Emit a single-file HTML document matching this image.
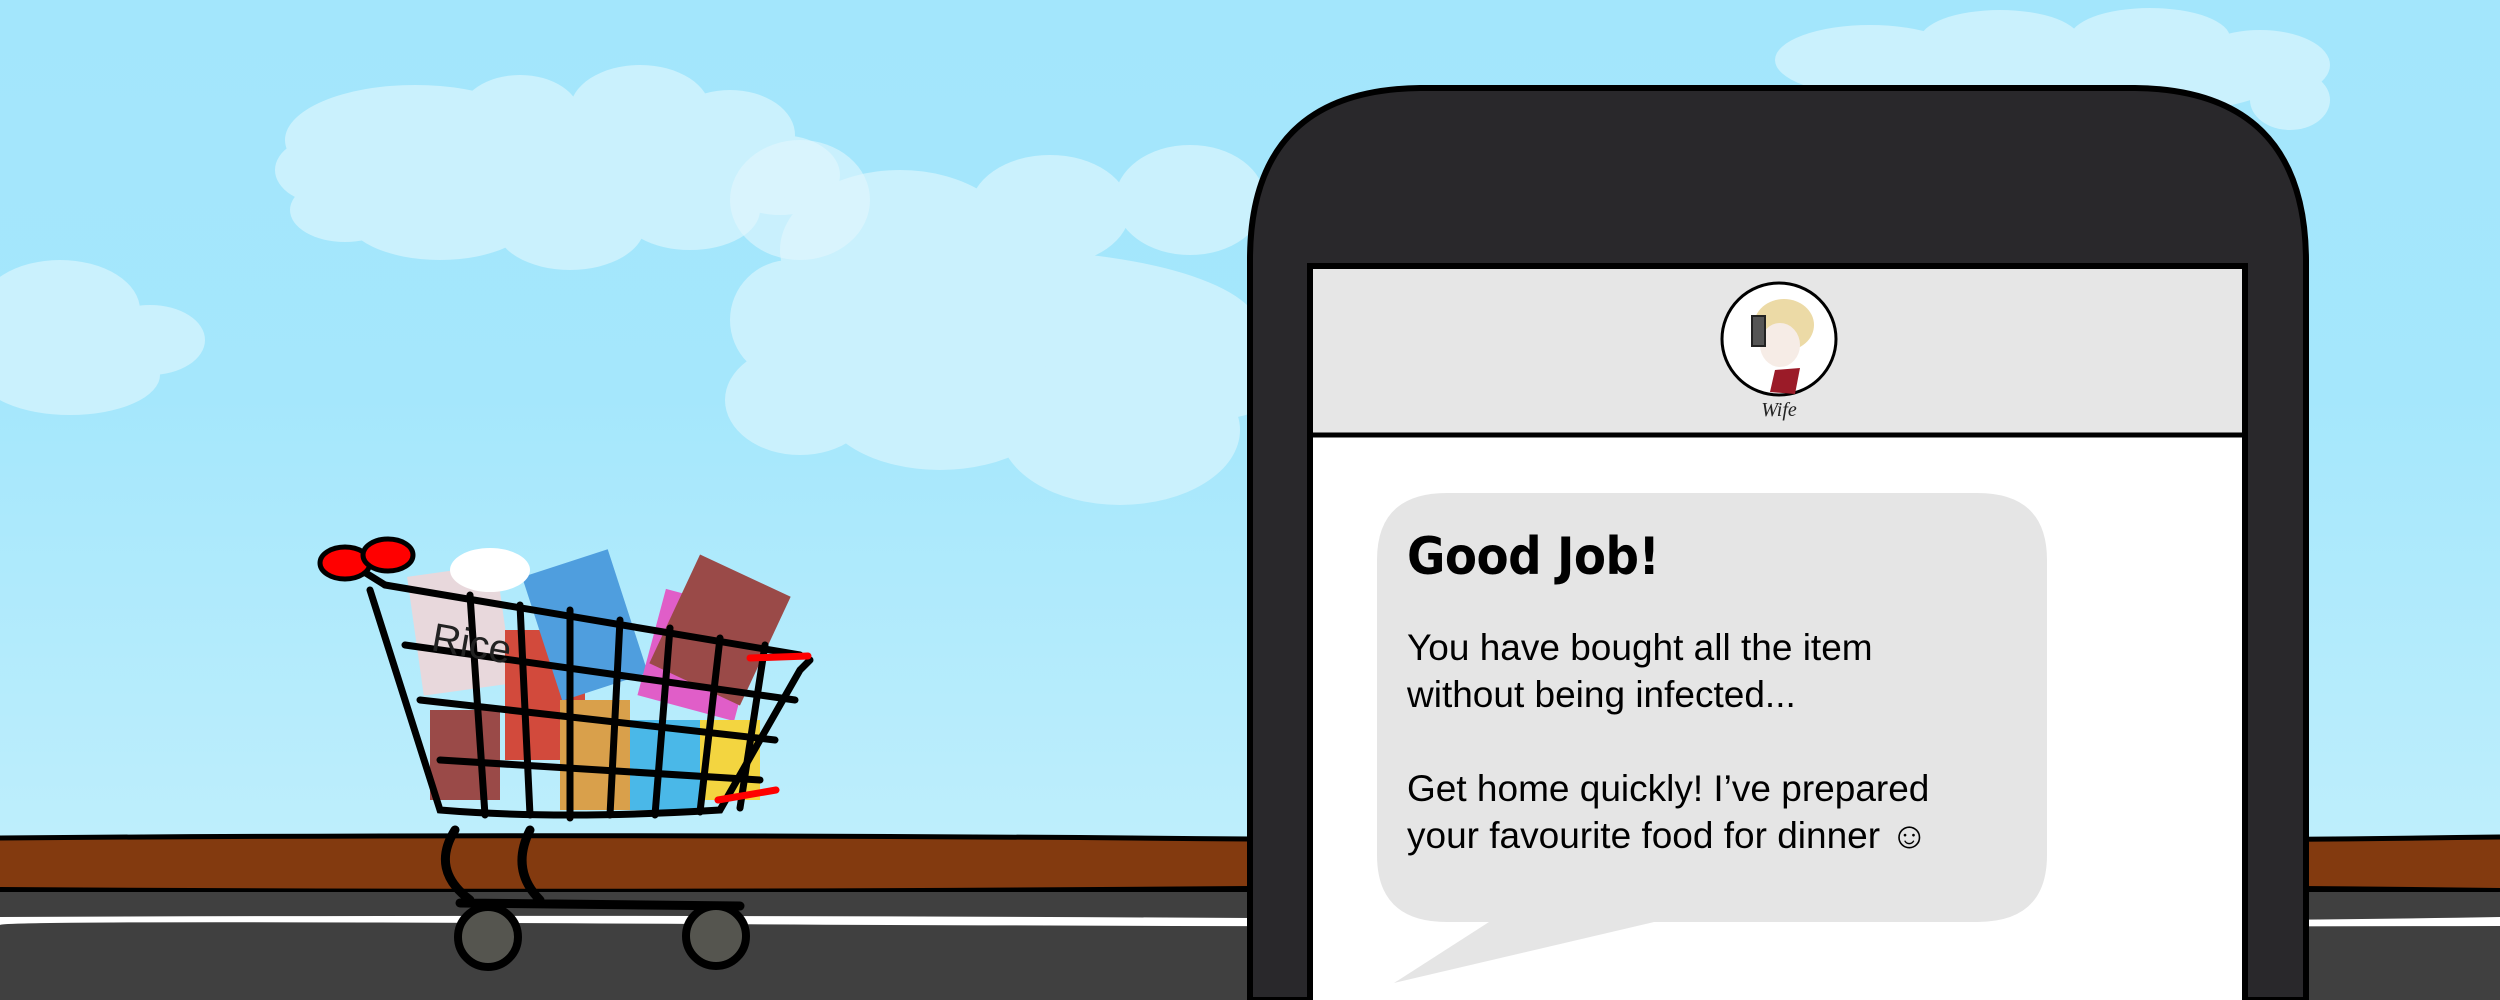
<!DOCTYPE html>
<html><head><meta charset="utf-8"><style>
html,body{margin:0;padding:0}
body{width:2500px;height:1000px;overflow:hidden;position:relative;background:linear-gradient(#a3e6fc 0px,#a5e7fc 400px,#bdeefc 830px);font-family:"Liberation Sans",sans-serif}
svg{position:absolute;left:0;top:0}
.t{position:absolute;left:1407px;color:#000;font-family:"DejaVu Sans Condensed","Liberation Sans",sans-serif}
.b{font-family:"Liberation Sans",sans-serif}
</style></head><body>
<svg width="2500" height="1000" viewBox="0 0 2500 1000">
<g fill="#caf1fd">
<ellipse cx="415" cy="140" rx="130" ry="55"/><ellipse cx="520" cy="115" rx="60" ry="40"/><ellipse cx="640" cy="110" rx="70" ry="45"/><ellipse cx="730" cy="135" rx="65" ry="45"/><ellipse cx="780" cy="175" rx="60" ry="40"/>
<ellipse cx="330" cy="170" rx="55" ry="35"/><ellipse cx="345" cy="210" rx="55" ry="32"/><ellipse cx="440" cy="215" rx="95" ry="45"/><ellipse cx="570" cy="225" rx="75" ry="45"/><ellipse cx="690" cy="210" rx="70" ry="40"/><ellipse cx="580" cy="170" rx="230" ry="60"/>
<ellipse cx="900" cy="250" rx="120" ry="80"/><ellipse cx="1050" cy="210" rx="80" ry="55"/><ellipse cx="1190" cy="200" rx="75" ry="55"/><ellipse cx="1000" cy="330" rx="260" ry="80"/><ellipse cx="790" cy="320" rx="60" ry="60"/><ellipse cx="800" cy="400" rx="75" ry="55"/><ellipse cx="940" cy="400" rx="120" ry="70"/><ellipse cx="1120" cy="430" rx="120" ry="75"/><ellipse cx="1210" cy="360" rx="90" ry="60"/>
<ellipse cx="60" cy="310" rx="80" ry="50"/><ellipse cx="150" cy="340" rx="55" ry="35"/><ellipse cx="70" cy="375" rx="90" ry="40"/><ellipse cx="20" cy="330" rx="60" ry="50"/>
<ellipse cx="1870" cy="60" rx="95" ry="35"/><ellipse cx="2000" cy="40" rx="80" ry="30"/><ellipse cx="2150" cy="38" rx="80" ry="30"/><ellipse cx="2260" cy="65" rx="70" ry="35"/><ellipse cx="2290" cy="100" rx="40" ry="30"/><ellipse cx="2060" cy="80" rx="220" ry="40"/>
</g>
<ellipse cx="800" cy="200" rx="70" ry="60" fill="#e2f7fe" opacity=".6"/>
<rect x="0" y="838" width="2500" height="52" fill="#833a0f"/>
<path d="M0 838 Q600 833 1250 839 T2500 837" stroke="#000" stroke-width="5" fill="none"/>
<path d="M0 890 Q600 894 1250 889 T2500 891" stroke="#000" stroke-width="6" fill="none"/>
<rect x="0" y="892" width="2500" height="108" fill="#404040"/>
<path d="M0 917 Q700 914 1400 919 T2500 917 L2500 926 Q1400 928 700 924 T0 925Z" fill="#fff"/>
<g stroke="#000" stroke-linecap="round" fill="none">
<path d="M455 830 Q430 870 470 900 M530 830 Q510 870 540 900 M460 903 L740 906" stroke-width="9"/>
<circle cx="488" cy="937" r="30" fill="#55554f" stroke-width="8"/>
<circle cx="716" cy="936" r="30" fill="#55554f" stroke-width="8"/>
</g>
<g>
<rect x="415" y="570" width="90" height="120" fill="#e8d8dc" transform="rotate(-8 460 630)"/>
<rect x="505" y="630" width="80" height="130" fill="#d24a3c"/>
<rect x="540" y="560" width="90" height="130" fill="#4f9ede" transform="rotate(-18 585 625)"/>
<rect x="650" y="600" width="100" height="110" fill="#e05ec8" transform="rotate(15 700 655)"/>
<rect x="670" y="570" width="100" height="120" fill="#9a4a48" transform="rotate(25 720 630)"/>
<rect x="560" y="700" width="70" height="110" fill="#d9a04b"/>
<rect x="630" y="720" width="70" height="90" fill="#4ab8e8"/>
<rect x="700" y="720" width="60" height="80" fill="#f3d540"/>
<rect x="430" y="710" width="70" height="90" fill="#9a4a48"/>
<ellipse cx="490" cy="570" rx="40" ry="22" fill="#fff"/>
</g>
<g stroke="#000" stroke-width="7" fill="none" stroke-linecap="round">
<path d="M370 590 L440 810 Q560 820 720 810 L800 670 L810 660"/>
<path d="M385 585 L800 655"/>
<path d="M405 645 L795 700 M420 700 L775 740 M440 760 L760 780"/>
<path d="M470 595 L485 815 M520 605 L530 815 M570 610 L570 818 M620 620 L610 815 M670 628 L655 815 M720 638 L700 812 M765 645 L740 808"/>
<path d="M345 560 L385 585"/>
</g>
<ellipse cx="345" cy="563" rx="25" ry="16" fill="#f00" stroke="#000" stroke-width="5"/>
<ellipse cx="388" cy="555" rx="25" ry="16" fill="#f00" stroke="#000" stroke-width="5"/>
<path d="M750 658 L808 656 M718 800 L776 790" stroke="#f00" stroke-width="7" stroke-linecap="round"/>
<text x="430" y="650" font-size="40" font-family="Liberation Sans" fill="#222" transform="rotate(10 430 650)">Rice</text>
<path d="M1250 1000 L1250 260 Q1250 90 1420 88 L2135 88 Q2305 90 2306 260 L2306 1000 Z" fill="#29282b" stroke="#000" stroke-width="6"/>
<rect x="1310" y="266" width="935" height="740" fill="#fff" stroke="#000" stroke-width="6"/>
<rect x="1313" y="269" width="929" height="165" fill="#e6e6e6"/>
<path d="M1310 435 L2245 435" stroke="#000" stroke-width="5"/>
<ellipse cx="1779" cy="339" rx="57" ry="56" fill="#fff" stroke="#000" stroke-width="3"/>
<ellipse cx="1784" cy="325" rx="30" ry="26" fill="#ecdaa6"/>
<ellipse cx="1780" cy="345" rx="20" ry="22" fill="#f6ece6"/>
<path d="M1775 370 L1800 368 L1795 394 L1770 392Z" fill="#9b1b28"/>
<rect x="1752" y="316" width="13" height="30" fill="#555" stroke="#222" stroke-width="2"/>
<text x="1779" y="416" text-anchor="middle" font-size="20" font-style="italic" font-family="Liberation Serif" fill="#222">Wife</text>
<path d="M1377 560 Q1377 493 1447 493 L1977 493 Q2047 493 2047 560 L2047 855 Q2047 922 1977 922 L1654 922 L1394 983 L1489 922 L1447 922 Q1377 922 1377 855 Z" fill="#e5e5e5"/>
</svg>
<div class="t" style="top:527px;font-size:52px;font-weight:bold;letter-spacing:-0.5px">Good Job!</div>
<div class="t b" style="top:624px;font-size:37px;line-height:47px">You have bought all the item<br>without being infected...<br><br>Get home quickly! I’ve prepared<br>your favourite food for dinner ☺</div>
</body></html>
